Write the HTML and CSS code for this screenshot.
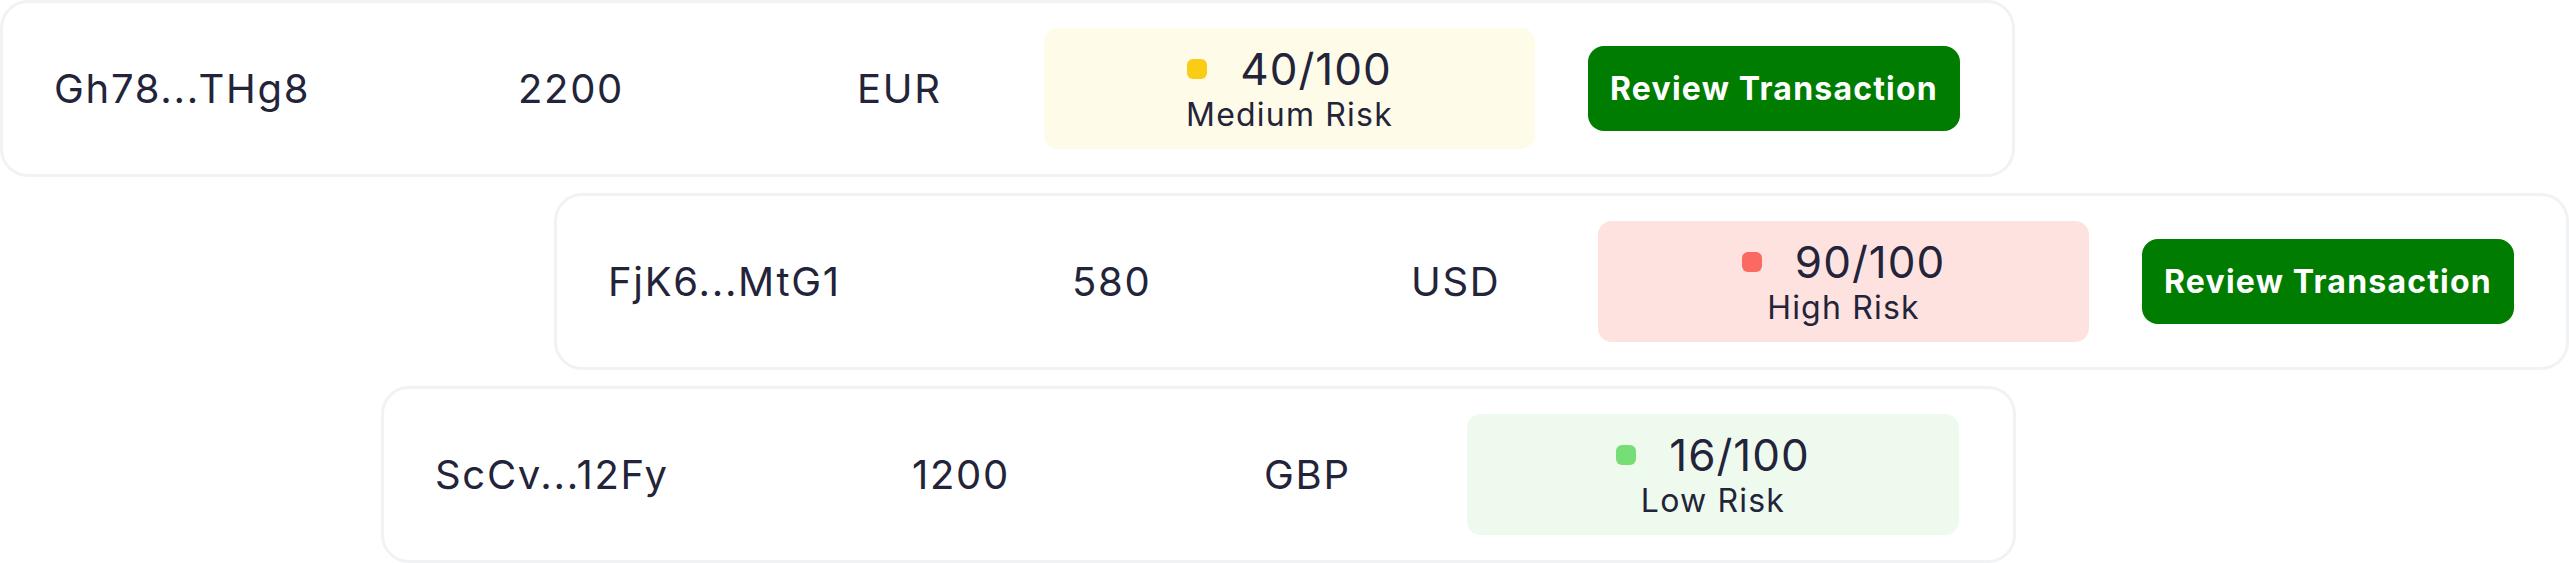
FILE: index.html
```html
<!DOCTYPE html>
<html lang="en">
<head>
<meta charset="utf-8">
<title>Transactions</title>
<link rel="stylesheet" href="styles.css">
</head>
<body>
<main class="list">
  <article class="card card--full card--a">
    <span class="cell">Gh78...THg8</span>
    <span class="cell">2200</span>
    <span class="cell">EUR</span>
    <div class="risk risk--medium">
      <div class="risk__score"><span class="risk__dot"></span><span>40/100</span></div>
      <div class="risk__label">Medium Risk</div>
    </div>
    <button class="btn" type="button">Review Transaction</button>
  </article>
  <article class="card card--full card--b">
    <span class="cell">FjK6...MtG1</span>
    <span class="cell">580</span>
    <span class="cell">USD</span>
    <div class="risk risk--high">
      <div class="risk__score"><span class="risk__dot"></span><span>90/100</span></div>
      <div class="risk__label">High Risk</div>
    </div>
    <button class="btn" type="button">Review Transaction</button>
  </article>
  <article class="card card--short card--c">
    <span class="cell">ScCv...12Fy</span>
    <span class="cell">1200</span>
    <span class="cell">GBP</span>
    <div class="risk risk--low">
      <div class="risk__score"><span class="risk__dot"></span><span>16/100</span></div>
      <div class="risk__label">Low Risk</div>
    </div>
  </article>
</main>
</body>
</html>
```
FILE: styles.css
```css
* { box-sizing: border-box; }
html, body { margin: 0; padding: 0; background: #ffffff; }
body {
  font-family: Inter, "Noto Sans", sans-serif;
  color: #23243a;
}
.list {
  display: flex;
  flex-direction: column;
  align-items: flex-start;
  gap: 16px;
}
.card {
  display: grid;
  align-items: center;
  height: 177px;
  border: 3px solid #f1f2f4;
  border-radius: 28px;
  background: #fff;
  padding: 0 52px 0 51px;
}
.card--full { grid-template-columns: 464px 339px 187px 544px 372px; }
.card--short { grid-template-columns: 477px 352px 203px 492px; padding-right: 54px; }
.card--a { margin-left: 0; }
.card--b { margin-left: 554px; }
.card--c { margin-left: 381px; }

.cell {
  font-size: 40px;
  line-height: 1.2;
  letter-spacing: 1.7px;
  white-space: nowrap;
}
.risk {
  width: 491px;
  height: 121px;
  border-radius: 14px;
  display: flex;
  flex-direction: column;
  align-items: center;
  justify-content: center;
}
.card--short .risk { width: 492px; }
.risk--medium { background: #fefbe9; }
.risk--high { background: #fee2e0; }
.risk--low { background: #effaee; }
.risk__score {
  display: flex;
  align-items: center;
  gap: 33px;
  font-size: 44px;
  line-height: 52px;
  letter-spacing: 1px;
}
.risk__dot {
  width: 20px;
  height: 20px;
  border-radius: 6px;
}
.risk--medium .risk__dot { background: #facc15; }
.risk--high .risk__dot { background: #fb6a62; }
.risk--low .risk__dot { background: #77dd77; }
.risk__label {
  font-size: 32px;
  line-height: 40px;
  letter-spacing: 1.2px;
}
.btn {
  width: 372px;
  height: 85px;
  justify-self: end;
  border: 0;
  border-radius: 16px;
  background: #007c00;
  color: #fff;
  font-family: Inter, "Noto Sans", sans-serif;
  font-weight: 700;
  font-size: 32px;
  letter-spacing: 1.2px;
  padding: 0;
  cursor: pointer;
}
```
